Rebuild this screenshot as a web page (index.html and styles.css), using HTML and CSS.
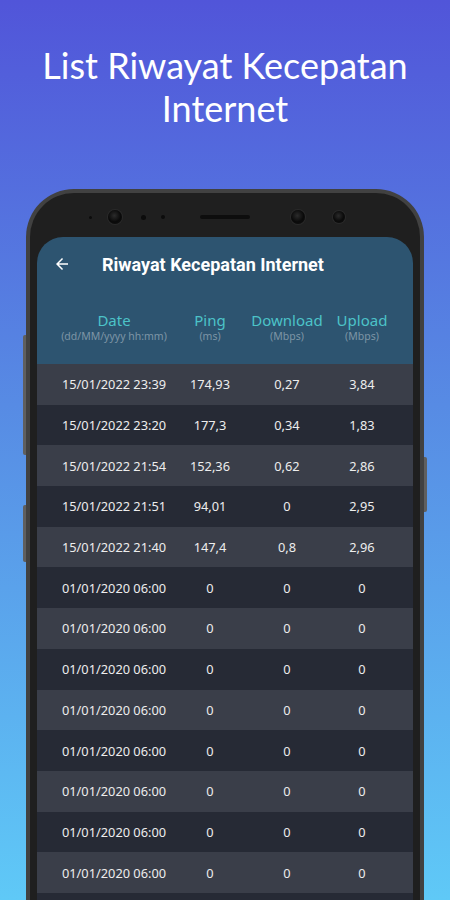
FILE: index.html
```html
<!DOCTYPE html>
<html lang="id">
<head>
<meta charset="utf-8">
<title>Riwayat Kecepatan Internet</title>
<link rel="stylesheet" href="styles.css">
</head>
<body>
<h1 class="headline">List Riwayat Kecepatan<br>Internet</h1>
<div class="phone">
  <span class="side-btn btn-l1"></span>
  <span class="side-btn btn-l2"></span>
  <span class="side-btn btn-r1"></span>
  <div class="sensors">
    <span class="dot d1"></span>
    <span class="cam c1"></span>
    <span class="dot d2"></span>
    <span class="dot d3"></span>
    <span class="speaker"></span>
    <span class="cam c2"></span>
    <span class="cam c3"></span>
  </div>
  <div class="screen">
    <div class="appbar">
      <svg class="back" viewBox="0 0 24 24" width="18" height="18"><path d="M20 11H7.83l5.59-5.59L12 4l-8 8 8 8 1.41-1.41L7.83 13H20v-2z" fill="#fff"/></svg>
      <span class="appbar-title">Riwayat Kecepatan Internet</span>
    </div>
    <div class="thead">
      <div class="th"><span class="th-main">Date</span><span class="th-sub">(dd/MM/yyyy hh:mm)</span></div>
      <div class="th"><span class="th-main">Ping</span><span class="th-sub">(ms)</span></div>
      <div class="th"><span class="th-main">Download</span><span class="th-sub">(Mbps)</span></div>
      <div class="th"><span class="th-main">Upload</span><span class="th-sub">(Mbps)</span></div>
    </div>
    <div class="rows">
      <div class="row"><span>15/01/2022 23:39</span><span>174,93</span><span>0,27</span><span>3,84</span></div>
      <div class="row"><span>15/01/2022 23:20</span><span>177,3</span><span>0,34</span><span>1,83</span></div>
      <div class="row"><span>15/01/2022 21:54</span><span>152,36</span><span>0,62</span><span>2,86</span></div>
      <div class="row"><span>15/01/2022 21:51</span><span>94,01</span><span>0</span><span>2,95</span></div>
      <div class="row"><span>15/01/2022 21:40</span><span>147,4</span><span>0,8</span><span>2,96</span></div>
      <div class="row"><span>01/01/2020 06:00</span><span>0</span><span>0</span><span>0</span></div>
      <div class="row"><span>01/01/2020 06:00</span><span>0</span><span>0</span><span>0</span></div>
      <div class="row"><span>01/01/2020 06:00</span><span>0</span><span>0</span><span>0</span></div>
      <div class="row"><span>01/01/2020 06:00</span><span>0</span><span>0</span><span>0</span></div>
      <div class="row"><span>01/01/2020 06:00</span><span>0</span><span>0</span><span>0</span></div>
      <div class="row"><span>01/01/2020 06:00</span><span>0</span><span>0</span><span>0</span></div>
      <div class="row"><span>01/01/2020 06:00</span><span>0</span><span>0</span><span>0</span></div>
      <div class="row"><span>01/01/2020 06:00</span><span>0</span><span>0</span><span>0</span></div>
      <div class="row"></div>
    </div>
  </div>
</div>
</body>
</html>
```
FILE: styles.css
```css
html, body {
  margin: 0;
  padding: 0;
}
body {
  width: 450px;
  height: 900px;
  overflow: hidden;
  background: linear-gradient(180deg, #5155d9 0%, #578be4 45%, #5fc9f7 100%);
  font-family: "Noto Sans", "Open Sans", sans-serif;
}
.headline {
  margin: 0;
  padding-top: 44px;
  font-family: Lato, "Noto Sans", sans-serif;
  font-weight: 400;
  font-size: 36px;
  line-height: 43px;
  color: #fff;
  text-align: center;
}
.phone {
  position: relative;
  box-sizing: border-box;
  width: 398px;
  height: 800px;
  margin: 59px auto 0;
  padding: 0 7px;
  background: #1f1f1f;
  border: 4px solid #414141;
  border-bottom: none;
  border-radius: 48px 48px 0 0;
}
.side-btn {
  position: absolute;
  width: 3px;
  background: #5f5f5f;
}
.btn-l1 { left: -7px; top: 142px; height: 120px; border-radius: 2px 0 0 2px; }
.btn-l2 { left: -7px; top: 312px; height: 57px; border-radius: 2px 0 0 2px; }
.btn-r1 { right: -7px; top: 264px; height: 55px; border-radius: 0 2px 2px 0; }
.sensors {
  box-sizing: border-box;
  height: 44px;
  padding: 4px 0 0 51.5px;
  display: flex;
  align-items: center;
}
.dot { border-radius: 50%; background: #0c0c0c; flex: none; }
.d1 { width: 3px; height: 3px; }
.d2 { width: 5px; height: 5px; margin-left: 18.5px; }
.d3 { width: 4px; height: 4px; margin-left: 15.5px; }
.cam {
  flex: none;
  border-radius: 50%;
  background: radial-gradient(circle at 45% 40%, #2b2b2b 0%, #0a0a0a 55%, #111 100%);
  box-shadow: 0 0 0 1px #2a2a2a;
}
.c1 { width: 14px; height: 14px; margin-left: 16.5px; }
.c2 { width: 14px; height: 14px; margin-left: 41px; }
.c3 { width: 12px; height: 12px; margin-left: 28px; }
.speaker {
  flex: none;
  width: 50px;
  height: 4px;
  margin-left: 35px;
  border-radius: 2px;
  background: #0d0d0d;
}
.screen {
  border-radius: 26px 26px 0 0;
  overflow: hidden;
  background: #2d5470;
}
.appbar {
  height: 54px;
  display: flex;
  align-items: center;
  padding-left: 16px;
}
.back { flex: none; }
.appbar-title {
  margin-left: 31px;
  font-family: Roboto, "Noto Sans", sans-serif;
  font-weight: 700;
  font-size: 18px;
  color: #fff;
}
.thead, .row {
  display: grid;
  grid-template-columns: 120px 72px 82px 68px;
  padding-left: 17px;
}
.thead {
  height: 73px;
  box-sizing: border-box;
  padding-top: 20px;
}
.th {
  display: flex;
  flex-direction: column;
  align-items: center;
  white-space: nowrap;
}
.th-main {
  font-size: 15px;
  line-height: 18px;
  color: #4cc3c8;
}
.th-sub {
  margin-top: 1px;
  font-size: 10.5px;
  line-height: 13px;
  color: #7d94a6;
}
.row {
  height: 40.7px;
  align-items: center;
  background: #3a3e49;
  font-size: 12.8px;
  color: #ededed;
}
.row:nth-child(even) {
  background: #262a35;
}
.row span {
  display: flex;
  justify-content: center;
  white-space: nowrap;
}
```
